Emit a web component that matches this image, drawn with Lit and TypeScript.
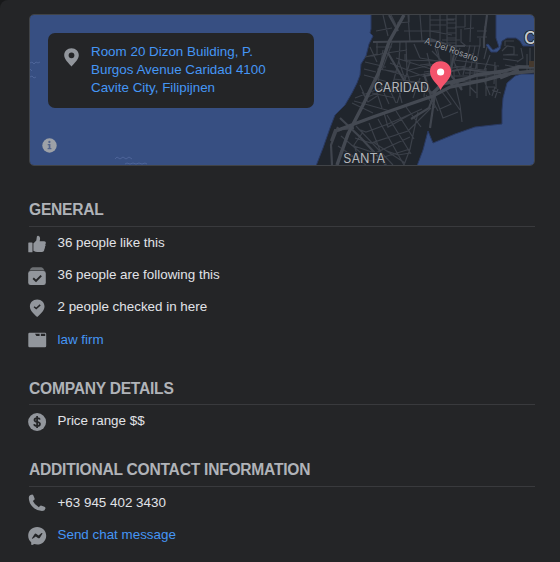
import { LitElement, html, svg, css } from "lit";
import { customElement } from "lit/decorators.js";

const C = "#92969c";
const D = "#242527";

const icons: Record<string, unknown> = {
  like: svg`<path fill=${C} d="M0.3 8.1Q0.3 7.6 .9 7.6H3.9Q4.5 7.6 4.5 8.1V16.7Q4.5 17.3 3.9 17.3H.9Q.3 17.3 .3 16.7ZM5.4 8.6L8.3 5.5 8.9 1.6Q9.2.6 10.3.8 12.2 1.3 12.1 3.6L11.7 6.2H16.2Q17.9 6.3 17.9 7.8 17.9 8.7 17.3 9.2 18 10.1 17.3 11.3L16.9 11.8Q17.3 13 16.4 13.9 16.3 16.9 13.8 16.9H9.4Q7.5 16.9 5.4 15.7Z"/>`,
  follow: svg`<path fill="#6d7074" d="M5 .2H13Q14.3.2 15 1.2L16.6 3.6H1.4L3 1.2Q3.7.2 5 .2Z"/><rect x=".2" y="4.1" width="17.6" height="14" rx="2.4" fill=${C}/><path d="M5.2 11.3L8 14 13.2 8.6" fill="none" stroke=${D} stroke-width="1.9"/>`,
  check: svg`<path fill=${C} d="M9.2.5C4.8.5 1.9 3.5 1.9 7.5 1.9 11.8 6.1 15.3 9.2 18 12.3 15.3 16.5 11.8 16.5 7.5 16.5 3.5 13.6.5 9.2.5Z"/><path d="M6.1 7.7L8.2 9.6 12.2 5.9" fill="none" stroke=${D} stroke-width="1.5"/>`,
  folder: svg`<path fill=${C} d="M.3 3Q.3 1.8 1.5 1.8H17Q18.2 1.8 18.2 3V15Q18.2 16.3 17 16.3H1.5Q.3 16.3.3 15Z"/><path fill=${D} d="M7 2.7H11.6V5.1H8.4ZM12.9 2.7H17.2V5.1H12.9Z"/>`,
  money: svg`<circle cx="9.1" cy="9" r="9" fill=${C}/><path d="M12 6.5Q11.5 5 9.1 5 6.5 5 6.5 6.9 6.5 8.4 9.1 8.9 12 9.5 12 11.1 12 13.1 9.1 13.1 6.5 13.1 6 11.3M9.1 3V15.1" fill="none" stroke=${D} stroke-width="1.75"/>`,
  phone: svg`<path fill=${C} d="M2 1.2L3.4.7Q4.8.3 5.4 1.6L6.5 4.3Q6.9 5.3 6 6.1L4.9 7.1Q6.5 11 10.9 13.2L11.9 12Q12.7 11.2 13.7 11.7L16.4 12.8Q17.7 13.4 17.4 14.6 16.9 17.1 14 17.1 8.9 17.1 4.8 13 .8 9 .8 3.7 .8 1.8 2 1.2Z"/>`,
  messenger: svg`<path fill=${C} d="M9.2 0C4 0 .2 3.7.2 8.7 .2 11.4 1.4 13.7 3.2 15.2V17.3Q3.3 18.4 4.3 18L6.3 17.1C12.2 18.8 18.2 15 18.2 8.7 18.2 3.7 14.3 0 9.2 0Z"/><path fill=${D} d="M3.8 11.4L6.5 7.2Q7.3 6.1 8.5 6.9L10.5 8.4 13.6 6.1Q14.4 5.8 14.5 6.6L11.9 10.7Q11 11.8 9.9 11L7.8 9.4 4.6 11.8Z"/>`,
};

interface Row { icon: string; text: string; link?: boolean }
const sections: { title: string; rows: Row[] }[] = [
  {
    title: "GENERAL",
    rows: [
      { icon: "like", text: "36 people like this" },
      { icon: "follow", text: "36 people are following this" },
      { icon: "check", text: "2 people checked in here" },
      { icon: "folder", text: "law firm", link: true },
    ],
  },
  { title: "COMPANY DETAILS", rows: [{ icon: "money", text: "Price range $$" }] },
  {
    title: "ADDITIONAL CONTACT INFORMATION",
    rows: [
      { icon: "phone", text: "+63 945 402 3430" },
      { icon: "messenger", text: "Send chat message", link: true },
    ],
  },
];

@customElement("location-map")
export class LocationMap extends LitElement {
  static styles = css`
    :host { display: block; height: 150px; }
    svg { display: block; width: 100%; height: 100%; }
    .land { fill: #20252c; stroke: #2a3a62; stroke-width: 1; }
    .minor, .mid, .major { fill: none; stroke: #3b4049; }
    .minor { stroke-width: 1.2; }
    .mid { stroke-width: 2.2; stroke: #40454e; }
    .major { stroke-width: 3.4; stroke: #444952; }
    .wave { fill: none; stroke: #536a9e; stroke-width: .8; }
    text { font-family: Inter, "Liberation Sans", sans-serif; fill: #b4b6ba; paint-order: stroke; stroke: #20252c; stroke-width: 1.5px; }
    .street { font-size: 9px; fill: #9b9ea3; }
    .town { font-size: 12.4px; }
    .city { font-size: 17px; font-weight: 500; fill: #c8c9cb; }
  `;

  render() {
    return html`<svg viewBox="30 15 504 150" preserveAspectRatio="none">
      <rect x="30" y="15" width="504" height="150" fill="#374f82" />
      <path class="wave" d="M30 63l2-1 2 2 2-2 2 1 2-1M30 69l2 2M30 77l2-1 2 2 2-1M115 159l2-2 3 2 3-2 3 2 3-2 3 2M125 164l2-1 3 1 3-1 3 1 3-1 3 1 3-1 2 1" />
      <path class="land" d="M371 14V29L370 33 373 36 369 44 366 56 361 64 360 75 357 83 352 93 345 105 335 115 330 128 323 148 316 166H417L423 150 428 131 433 143 455 134 475 127 502 124V110L503 98 507 83 515 76 521 74H535V46H523L520 41 516 38H507L502 41 500 49 497 52 491 52 486 45 488 44 493 50 499 47 496 38V14Z" />
      <path class="minor" d="M377 41V54L365 57M370 47L377 62M365 57L382 54M365 62L386 67M364 69L376 72M364 75L375 78M376 47H392M388 36L383 15M397 23L409 22V15M376 31L392 28M408 15L410 42M420 15L422 41M430 15V39M391 15L396 25M404 31H439M380 54L407 50M377 69L400 72M373 78L388 82M383 50L378 83M400 42L399 62 405 79M406 42L407 73 412 88M414 44L420 58M392 43L382 70M385 70L410 77 439 71M390 63L425 77M396 58L434 70M409 70L439 63M399 60L391 91M410 61L404 84M427 53L433 77M435 48L441 65M405 54V60L440 61M360 85L366 98M355 98L386 86M352 103L373 113M354 101L390 111M362 92L368 102 377 96M365 98L385 90M374 84L382 108M380 84L389 104M386 82L396 103M391 93L399 91 402 103M405 80L397 103M420 78L413 98M425 81L424 97M394 79L410 81M372 93L395 98M384 113L388 127 411 114M358 129L366 132 388 124 422 109M355 138L371 143 408 131 431 108M351 145L375 153 410 137M345 155L371 161 410 149M369 123L386 165M378 119L404 165M387 115L411 154M396 111L414 139M406 107L421 127M363 132L354 145 359 160M418 112L410 149 404 165M356 126L393 165M340 153L350 132M387 151L398 155 410 153M373 142L405 163M341 136L367 158M338 146L366 165" />
      <path class="minor" d="M430 20H454M430 25H446M430 31L452 35M442 40H460M440 15V44M455 27H465M447 19H456M447 23H456M447 28H456M447 33H456M447 38H456M447 43H456M447 15V45M456 15V46M465 15V27M461 29V42L466 46H480V38M464 29L474 28M477 31H487M477 37H487M471 15L470 42M485 26L484 45M432 51L444 63M451 46V75M437 46L440 62M420 58L443 62M420 65L430 64 433 78M424 72L466 66M454 60L499 66M454 66L497 72M465 73H500M454 82L482 80M454 76L501 76M470 45L463 75M475 46L469 78M480 44L474 77M487 47L484 59M490 55L482 76M495 62L494 84M470 66V96M477 64V98M486 68V96M470 87L476 93M484 80L490 95M496 66V89M487 87H495M492 90L501 93M495 87L492 96M498 89L495 98M454 71V79L462 88M460 48L454 62 460 75M455 84L460 105 462 122M446 90L460 110M435 96L443 118 458 112M439 88L451 104 440 109M432 100L438 111M426 95L435 108M502 51L507 46 514 47V54L503 55M503 59L518 61M505 46V41H514M521 48L523 58 517 62M518 55H506M527 54V72M530 48V72M515 65L530 67M505 65L520 68" />
      <path class="mid" d="M398 31L389 15M373 42L440 41M430 39L452 46 465 46M388 53L405 82 421 82M340 118L361 138 386 165M331 141L335 130 354 128M338 127L331 145 332 165M335 132L345 128M411 119L429 108 434 94M424 74L433 102M456 45L450 74 462 90M487 15L484 38V48M424 76L463 69 501 74M422 86L435 95M435 94L430 128" />
      <path class="major" d="M404 15L389 42 378 74 363 105 348 134 337 165M338 130L373 117 410 104 433 96 450 87 485 80 507 74 534 71M450 84L477 75 504 71 519 67 534 67M433 93L442 84 465 79M500 78L519 70" />
      <rect x="529" y="61" width="5" height="6" fill="#45392e" />
      <text class="street" transform="translate(424 43.3) rotate(19.5)" textLength="56" lengthAdjust="spacingAndGlyphs">A. Del Rosario</text>
      <text class="town" x="374" y="91.5" textLength="55" lengthAdjust="spacingAndGlyphs">CARIDAD</text>
      <text class="town" x="343.3" y="162.8" textLength="42" lengthAdjust="spacingAndGlyphs">SANTA</text>
      <text class="city" x="524" y="44">C</text>
      <path fill="#f4546c" d="M440.6 61.2C434.3 61.2 430 65.8 430 71.6 430 79.5 437.4 83.3 440.6 90 443.8 83.3 451.2 79.5 451.2 71.6 451.2 65.8 446.9 61.2 440.6 61.2Z" />
      <circle cx="440.6" cy="72" r="3.6" fill="#fff" />
    </svg>`;
  }
}

@customElement("app-root")
export class AppRoot extends LitElement {
  static styles = css`
    :host { display: block; height: 562px; background: #18191a; overflow: hidden; font-family: "Liberation Sans", Arial, sans-serif; }
    .card { box-sizing: border-box; height: 562px; padding: 14px 25px 0 29px; background: #242527; border-radius: 8px 0 0 0; }
    .map { position: relative; border: 1px solid #404347; border-radius: 5px; overflow: hidden; margin-bottom: 27px; }
    .address { position: absolute; left: 18px; top: 18px; width: 266px; height: 75px; box-sizing: border-box; padding: 10px 16px; border-radius: 7px; background: #242527; display: flex; gap: 12px; }
    .pin { width: 15px; height: 19px; margin-top: 4.5px; flex: none; }
    .address a { font-size: 13.4px; line-height: 18px; color: #4596f5; white-space: nowrap; }
    .info { position: absolute; left: 12px; top: 123px; width: 15px; height: 15px; }
    h2 { box-sizing: border-box; height: 49.3px; margin: 0; padding-top: 22.6px; border-bottom: 1px solid #393a3d; font-size: 15.6px; line-height: 20px; letter-spacing: -.24px; color: #b0b3b8; white-space: nowrap; }
    section:first-of-type h2 { height: 34.2px; padding-top: 7px; }
    .row { display: flex; align-items: center; height: 32.25px; }
    .icon { width: 19px; height: 19px; margin: 1.4px 10.5px 0 -1px; flex: none; }
    .label { font-size: 13.4px; line-height: 18px; margin-bottom: .8px; color: #e1e3e7; white-space: nowrap; }
    .link { color: #4596f5; }
  `;

  render() {
    return html`<div class="card">
      <div class="map">
        <location-map></location-map>
        <div class="address">
          <svg class="pin" viewBox="0 0 15 19"><path fill="#92969c" fill-rule="evenodd" d="M7.5.2C3.3.2.2 3.2.2 7.2.2 11.6 4.8 14.8 7.5 18.6 10.2 14.8 14.8 11.6 14.8 7.2 14.8 3.2 11.7.2 7.5.2ZM7.5 4.4A2.9 2.9 0 1 1 7.5 10.2 2.9 2.9 0 1 1 7.5 4.4Z" /></svg>
          <a>Room 20 Dizon Building, P.<br />Burgos Avenue Caridad 4100<br />Cavite City, Filipijnen</a>
        </div>
        <svg class="info" viewBox="0 0 15 15"><circle cx="7.5" cy="7.5" r="7.2" fill="#9da1a7" /><circle cx="7.4" cy="4" r="1.15" fill="#53648a" /><path fill="#53648a" d="M5.7 6.1H8.4V10H9.4V11.2H5.6V10H6.7V7.2H5.7Z" /></svg>
      </div>
      ${sections.map((s) => html`<section>
        <h2>${s.title}</h2>
        ${s.rows.map((r) => html`<div class="row">
          <svg class="icon" viewBox="0 0 19 19">${icons[r.icon]}</svg>
          <span class="label ${r.link ? "link" : ""}">${r.text}</span>
        </div>`)}
      </section>`)}
    </div>`;
  }
}
